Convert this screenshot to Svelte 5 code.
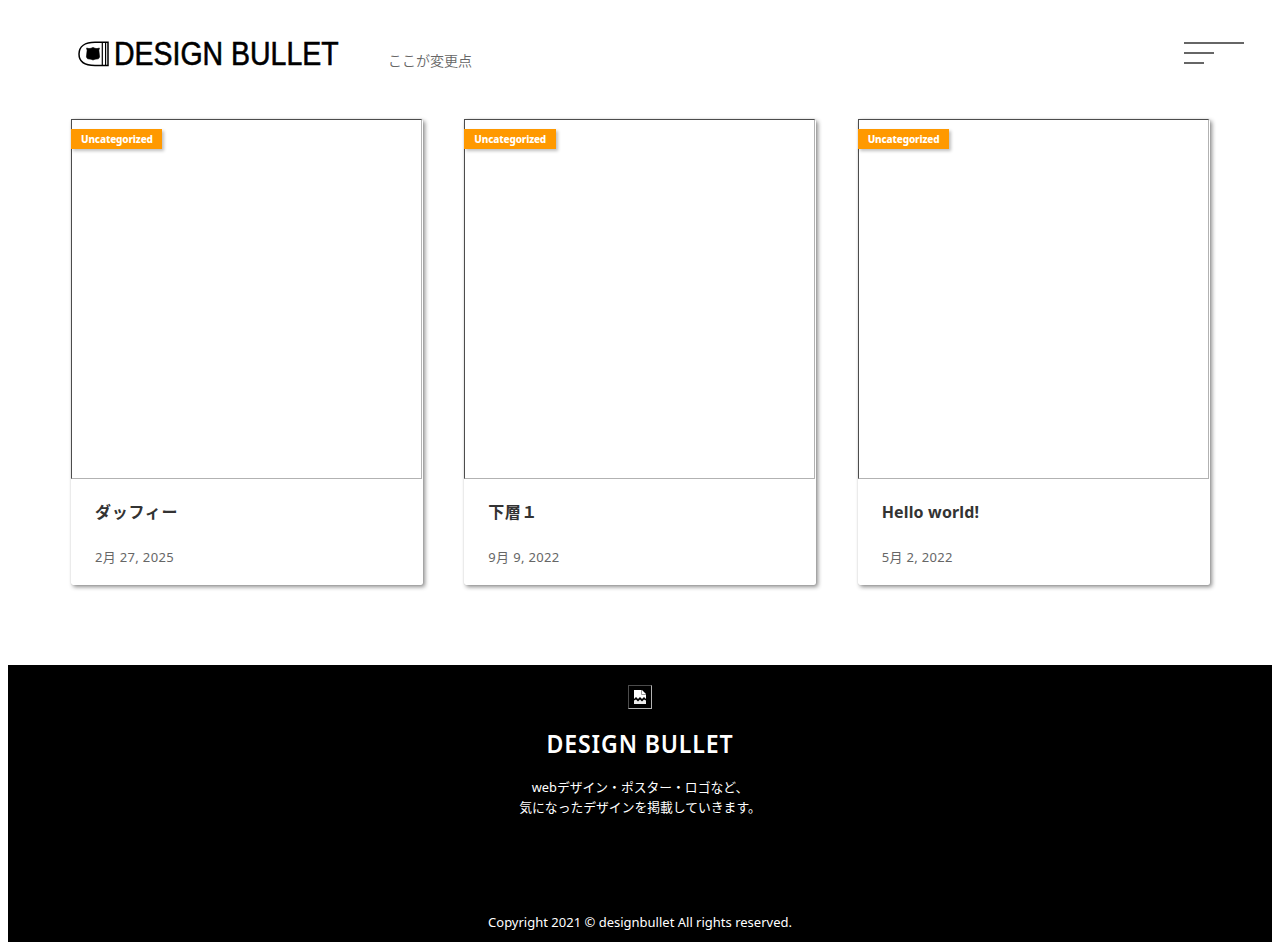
<script>
  const posts = [
    { title: 'ダッフィー', date: '2月 27, 2025', kind: 'kana' },
    { title: '下層１', date: '9月 9, 2022', kind: 'kanji' },
    { title: 'Hello world!', date: '5月 2, 2022', kind: 'latin' }
  ];
</script>

<div class="page">
  <header>
    <div class="logo">
      <svg class="mark" width="32" height="26" viewBox="0 0 32 26">
        <path d="M30 1.2H17C7 1.2 1 5.5 1 13S7 24.5 17 24.5H30Z" fill="#fff" stroke="#000" stroke-width="1.5" />
        <path d="M24.3 1V25M27.6 1V25" stroke="#000" stroke-width="1.2" />
        <path d="M8.6 7L11 7.6L13 7.3L15 6.4L17 7.3L19 7.6L21.4 7L20.9 9.5L21.6 16L20.4 17.8L17 18.2L15 19L13 18.2L9.6 17.8L8.4 16L9.1 9.5Z" fill="#000" stroke="#000" stroke-width=".6" />
      </svg>
      <span class="wordmark">DESIGN BULLET</span>
    </div>
    <p class="note">ここが変更点</p>
    <button class="menu" aria-label="menu"><i></i><i></i><i></i></button>
  </header>

  <main>
    {#each posts as post}
      <article>
        <div class="photo"><span class="tag">Uncategorized</span></div>
        <h2 class={post.kind}>{post.title}</h2>
        <time>{post.date}</time>
      </article>
    {/each}
  </main>

  <footer>
    <div class="broken">
      <svg width="12" height="14" viewBox="0 0 12 14">
        <path d="M0 0H8L12 4V9L10 7L8 9L6 7L4 9L2 7L0 9Z" fill="#fff" />
        <path d="M7.5 0V4.5H12" fill="none" stroke="#999" />
        <path d="M0 10.5L2 9.5L4 11.5L6 9.5L8 11.5L10 9.5L12 10.5V14H0Z" fill="#eee" />
      </svg>
    </div>
    <h1>DESIGN BULLET</h1>
    <p class="lead"><span>webデザイン・ポスター・ロゴなど、</span><span>気になったデザインを掲載していきます。</span></p>
    <small>Copyright 2021 © designbullet All rights reserved.</small>
  </footer>
</div>

<style>
  :global(body) { background: #fff; }
  .page {
    box-sizing: border-box;
    width: 1280px;
    height: 950px;
    padding: 0 8px 8px;
    display: flex;
    flex-direction: column;
    font-family: "Noto Sans", "Noto Sans CJK JP", sans-serif;
    color: #666;
  }
  h1, h2, p { margin: 0; }
  header {
    display: flex;
    align-items: flex-start;
    height: 119px;
    padding: 0 28px 0 70px;
    box-sizing: border-box;
  }
  .logo { display: flex; width: 310px; flex: none; padding-top: 41px; }
  .mark { flex: none; }
  .wordmark {
    font: 32.5px/26px "Liberation Sans", sans-serif;
    color: #000;
    margin-left: 3.5px;
    white-space: nowrap;
    transform: scaleX(.876);
    transform-origin: 0 50%;
    -webkit-text-stroke: 0.6px #000;
  }
  .note { font: 14px/20px "Noto Sans CJK JP", sans-serif; font-weight: 350; padding-top: 50px; white-space: nowrap; }
  .menu {
    margin: 42px 0 0 auto;
    padding: 0;
    border: 0;
    background: none;
    width: 60px;
    display: flex;
    flex-direction: column;
    gap: 8px;
  }
  .menu i { height: 2px; width: 60px; background: #666; }
  .menu i:nth-child(2) { width: 30px; }
  .menu i:nth-child(3) { width: 20px; }
  main {
    display: grid;
    grid-template-columns: repeat(3, 352px);
    column-gap: 41.33px;
    padding-left: 63px;
    height: 546px;
    align-items: start;
    flex: none;
  }
  article {
    height: 466px;
    border-radius: 2px;
    box-shadow: 2px 2px 4px rgba(0, 0, 0, .45), 0 0 1px rgba(0, 0, 0, .25);
    display: flex;
    flex-direction: column;
  }
  .photo {
    box-sizing: border-box;
    width: 351px;
    height: 360px;
    border: 1px solid;
    border-color: #4c4c4c #b2b2b2 #b2b2b2 #4c4c4c;
    padding-top: 9px;
  }
  .tag {
    display: block;
    box-sizing: border-box;
    width: 91.3px;
    height: 20px;
    margin-left: -1px;
    padding-left: 10px;
    background: #ff9900;
    color: #fff;
    font-size: 10px;
    line-height: 21px;
    font-weight: 800;
    letter-spacing: -.16px;
    box-shadow: 2px 2px 3px rgba(0, 0, 0, .25);
  }
  h2 { margin: 20px 0 0 24px; font-size: 16px; line-height: 26px; color: #333; font-weight: 700; letter-spacing: .5px; }
  h2.latin { letter-spacing: .15px; }
  h2.kana { letter-spacing: .7px; }
  time { margin: 22px 0 0 24px; font-size: 13px; line-height: 20px; letter-spacing: .33px; }
  footer {
    flex: 1;
    background: #000;
    color: #fff;
    display: flex;
    flex-direction: column;
    align-items: center;
  }
  .broken {
    margin-top: 20px;
    width: 24px;
    height: 24px;
    box-sizing: border-box;
    border: 1px solid;
    border-color: #4c4c4c #b2b2b2 #b2b2b2 #4c4c4c;
    display: grid;
    place-items: center;
  }
  h1 { margin-top: 17px; font-size: 25px; line-height: 34px; font-weight: 600; letter-spacing: .9px; transform: scaleX(.925); }
  .lead { margin-top: 17px; font-size: 12.8px; line-height: 20px; display: flex; flex-direction: column; align-items: center; }
  small { margin: auto 0 10px; font-size: 13px; line-height: 20px; }
</style>
